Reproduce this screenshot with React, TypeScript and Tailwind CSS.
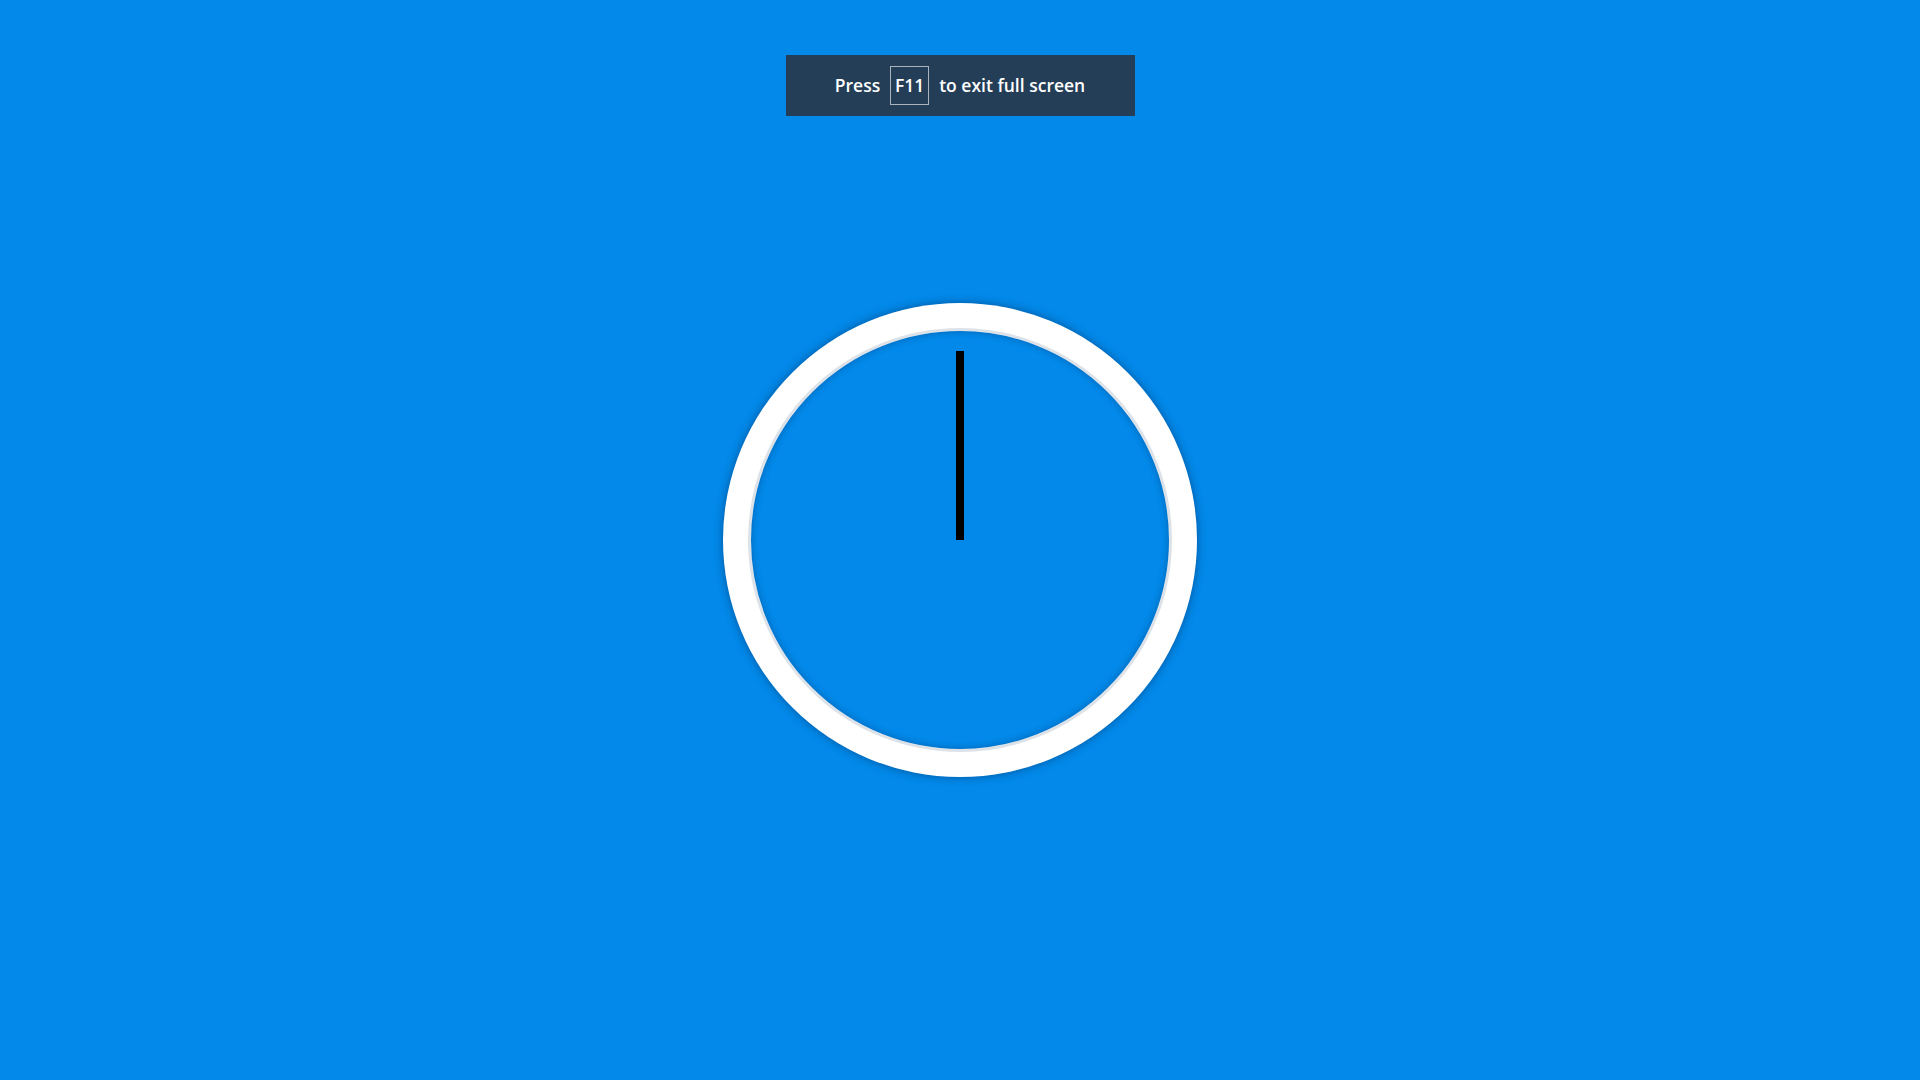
export default function App() {
  return (
    <div className="min-h-screen w-full bg-[#0289e9] flex flex-col items-center pt-[55px] font-['Open_Sans',sans-serif]">
      <div className="w-[349px] h-[61px] bg-[#233e56] flex items-center justify-center gap-[10px] text-white text-[17.5px] font-semibold">
        <span>Press</span>
        <span className="w-[39px] h-[39px] border border-[#aab4be] flex items-center justify-center">F11</span>
        <span>to exit full screen</span>
      </div>

      <div className="mt-[187px] w-[474px] h-[474px] rounded-full bg-white shadow-[0_0_8px_rgba(0,40,90,0.55)] flex items-center justify-center">
        <div className="relative w-[424px] h-[424px] rounded-full bg-[#0289e9] border-[3px] border-[#dde2e8] shadow-[inset_0_0_7px_rgba(0,40,90,0.4)]">
          {/* hand */}
          <div className="absolute left-[205px] top-[20px] w-[8px] h-[189px] bg-black" />
        </div>
      </div>
    </div>
  );
}
